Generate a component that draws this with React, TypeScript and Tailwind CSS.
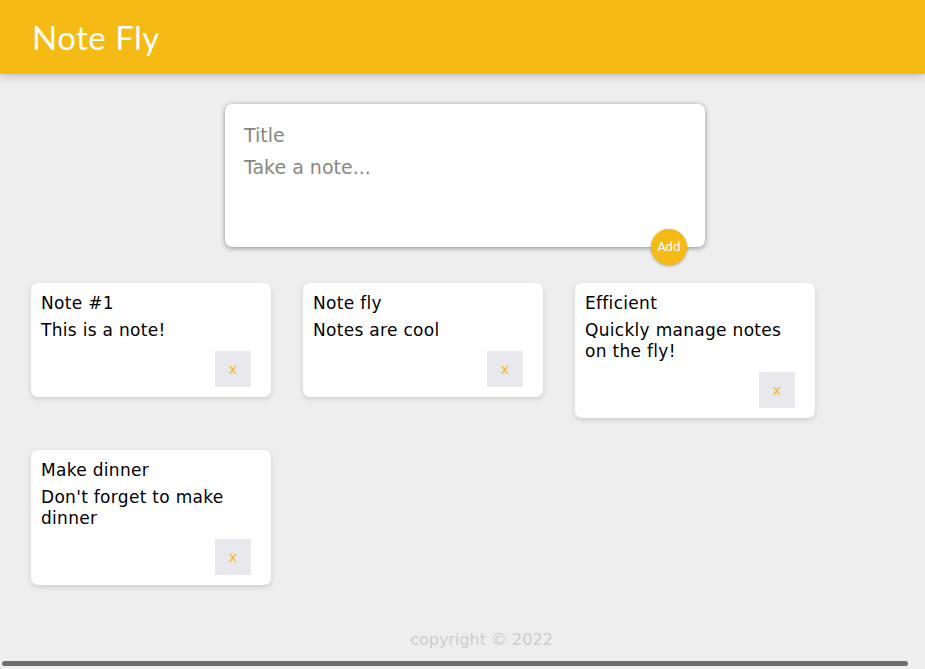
import { useState } from "react";

interface INote {
  id: number;
  title: string;
  content: string;
}

const initialNotes: INote[] = [
  { id: 1, title: "Note #1", content: "This is a note!" },
  { id: 2, title: "Note fly", content: "Notes are cool" },
  { id: 3, title: "Efficient", content: "Quickly manage notes on the fly!" },
  { id: 4, title: "Make dinner", content: "Don't forget to make dinner" },
];

const bodyFont = { fontFamily: '"DejaVu Sans", "Noto Sans", sans-serif' };

function Note({ note, onDelete }: { note: INote; onDelete: (id: number) => void }) {
  return (
    <div className="w-[240px] rounded-[7px] bg-white p-[10px] shadow-[0_2px_5px_#ccc] flow-root">
      <h1 className="mb-[6px] text-[17px] leading-[21px] tracking-[0.3px] text-black">{note.title}</h1>
      <p className="mb-[10px] text-[17px] leading-[21px] tracking-[0.3px] text-black whitespace-pre-wrap">
        {note.content}
      </p>
      <button
        onClick={() => onDelete(note.id)}
        className="float-right mr-[10px] h-9 w-9 bg-[#e9e9ed] text-[14px] text-[#f5ba13] cursor-pointer"
      >
        x
      </button>
    </div>
  );
}

export default function App() {
  const [notes, setNotes] = useState<INote[]>(initialNotes);
  const [title, setTitle] = useState("");
  const [content, setContent] = useState("");

  function addNote(e: React.FormEvent) {
    e.preventDefault();
    if (!title && !content) return;
    setNotes([...notes, { id: Date.now(), title, content }]);
    setTitle("");
    setContent("");
  }

  return (
    <div className="relative h-[669px] overflow-hidden bg-[#eeeeee]" style={bodyFont}>
      {/* هدر */}
      <header className="bg-[#f5ba13] px-8 py-4 shadow-[0_0_10px_0_rgba(0,0,0,0.3)]">
        <h1
          className="text-[33px] leading-[42px] font-normal tracking-[0.5px] text-white"
          style={{ fontFamily: '"Lato", "Noto Sans", sans-serif' }}
        >
          Note Fly
        </h1>
      </header>

      {/* فرم یادداشت */}
      <div className="pl-[5px]">
        <form
          onSubmit={addNote}
          className="relative mx-auto mt-[30px] mb-[20px] w-[480px] rounded-[7px] bg-white p-[15px] shadow-[0_1px_5px_rgb(138,137,137)]"
        >
          <input
            value={title}
            onChange={(e) => setTitle(e.target.value)}
            placeholder="Title"
            className="block h-8 w-full p-1 text-[19px] leading-[24px] outline-none placeholder:text-[#8a8686]"
          />
          <textarea
            value={content}
            onChange={(e) => setContent(e.target.value)}
            placeholder="Take a note..."
            rows={3}
            className="block h-[81px] w-full resize-none p-1 text-[19px] leading-[24px] outline-none placeholder:text-[#8a8686]"
          />
          <button
            type="submit"
            className="absolute right-[18px] bottom-[-18px] h-9 w-9 rounded-full bg-[#f5ba13] text-[12px] text-white shadow-[0_1px_3px_rgba(0,0,0,0.3)] cursor-pointer"
          >
            Add
          </button>
        </form>
      </div>

      {/* لیست یادداشت‌ها */}
      <div className="flex flex-wrap items-start gap-8 pl-[31px] pt-4">
        {notes.map((n) => (
          <Note key={n.id} note={n} onDelete={(id) => setNotes(notes.filter((x) => x.id !== id))} />
        ))}
      </div>

      <footer className="absolute left-[19px] top-[629px] w-full text-center">
        <p className="text-[16px] leading-[22px] text-[#cccccc]">copyright © 2022</p>
      </footer>

      {/* اسکرول بار */}
      <div className="absolute left-[2px] top-[661px] h-[5px] w-[906px] rounded-full bg-[#6e6e6e]" />
    </div>
  );
}
